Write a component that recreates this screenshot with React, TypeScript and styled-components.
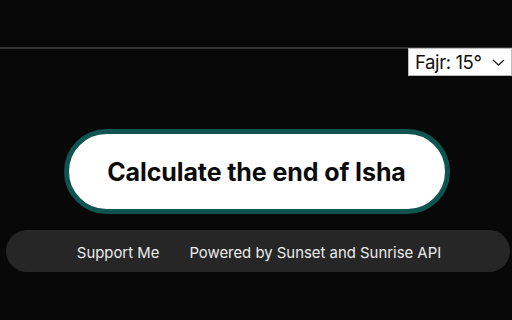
import React from 'react';
import styled, {createGlobalStyle} from 'styled-components';

const GlobalStyle = createGlobalStyle`
    html, body {
        margin: 0;
        padding: 0;
        background: #080808;
        font-family: Inter, 'Noto Sans', 'Liberation Sans', sans-serif;
    }
`;

const Page = styled.div`
    width: 512px;
    height: 320px;
    display: flex;
    flex-direction: column;
    background: #080808;
    overflow: hidden;
`;

const Header = styled.header`
    height: 49px;
    border-bottom: 2px solid #323232;
    box-sizing: border-box;
    flex-shrink: 0;
`;

const SettingsRow = styled.div`
    display: flex;
    justify-content: flex-end;
    margin-top: -1px;
`;

const SelectWrap = styled.div`
    position: relative;
    display: flex;
`;

const Select = styled.select`
    appearance: none;
    width: 104px;
    height: 28px;
    padding: 0 0 1px 6px;
    border: 1px solid #bdbdbd;
    border-radius: 0;
    background: #fff;
    color: #111;
    font-family: Inter, 'Noto Sans', sans-serif;
    font-size: 18.5px;
    letter-spacing: -0.4px;
    outline: none;
`;

const Chevron = styled.svg`
    position: absolute;
    right: 7px;
    top: 11px;
    pointer-events: none;
`;

const Main = styled.main`
    display: flex;
    justify-content: center;
    padding-top: 53px;
`;

const CalcButton = styled.button`
    width: 386px;
    height: 85px;
    margin-left: 1px;
    border: 5px solid #0e5451;
    border-radius: 43px;
    background: #fff;
    color: #0b0b0b;
    font-family: Inter, 'Noto Sans', sans-serif;
    font-size: 25px;
    font-weight: 700;
    letter-spacing: -0.1px;
    cursor: pointer;
`;

const Footer = styled.footer`
    display: flex;
    align-items: center;
    justify-content: center;
    gap: 30px;
    height: 42px;
    margin: 16px 2px 0 6px;
    padding: 3px 0 0 2px;
    box-sizing: border-box;
    border-radius: 21px;
    background: #262626;
`;

const FooterLink = styled.a`
    color: #ececec;
    font-size: 14.9px;
    text-decoration: none;
    cursor: pointer;
`;

export default function App() {
    return (
        <>
            <GlobalStyle />
            <Page>
                <Header />
                <SettingsRow>
                    <SelectWrap>
                        <Select defaultValue="15">
                            <option value="15">Fajr: 15°</option>
                            <option value="18">Fajr: 18°</option>
                        </Select>
                        <Chevron width="13" height="7" viewBox="0 0 13 7">
                            <path d="M1 1l5.5 5L12 1" fill="none" stroke="#222" strokeWidth="1.3" />
                        </Chevron>
                    </SelectWrap>
                </SettingsRow>
                <Main>
                    <CalcButton>Calculate the end of Isha</CalcButton>
                </Main>
                <Footer>
                    <FooterLink>Support Me</FooterLink>
                    <FooterLink>Powered by Sunset and Sunrise API</FooterLink>
                </Footer>
            </Page>
        </>
    );
}
